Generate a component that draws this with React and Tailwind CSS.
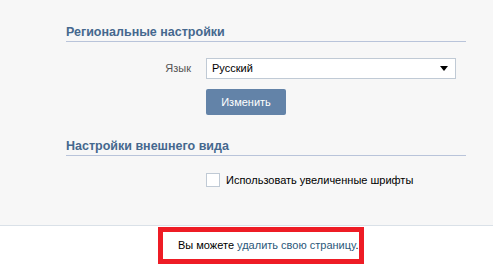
const App = () => {
  return (
    <div className="w-[493px] h-[267px] bg-white font-['Liberation_Sans',Arial,sans-serif] text-[11px] text-black overflow-hidden">
      <div className="h-[226px] bg-[#f7f7f7] border-b border-[#dae1e8] pl-[66px] pr-[27px] pt-[24px]">
        <div className="h-[18px] leading-[16px] border-b border-[#b9c4da] text-[#45688e] font-bold text-[12.5px]">
          Региональные настройки
        </div>

        <div className="flex items-center mt-[16px]">
          <div className="w-[125px] text-right text-[#555]">Язык</div>
          <div className="ml-[15px] w-[250px] h-[21px] bg-white border border-[#c0cad5] flex items-center justify-between pl-[5px] pr-[7px]">
            <span>Русский</span>
            <span className="w-0 h-0 border-l-[4px] border-r-[4px] border-t-[5px] border-l-transparent border-r-transparent border-t-black"></span>
          </div>
        </div>

        <div className="pl-[140px] mt-[10px]">
          <button className="w-[80px] h-[26px] rounded-[2px] bg-[#6383a8] text-white">Изменить</button>
        </div>

        <div className="mt-[23px] h-[18px] leading-[16px] border-b border-[#b9c4da] text-[#45688e] font-bold text-[12.5px]">
          Настройки внешнего вида
        </div>

        <div className="flex items-center pl-[140px] mt-[16px]">
          <span className="w-[14px] h-[14px] bg-white border border-[#c0cad5]"></span>
          <span className="ml-[6px]">Использовать увеличенные шрифты</span>
        </div>
      </div>

      <div className="pl-[158px] pt-[1px]">
        <div className="w-[206px] h-[37px] border-[5px] border-[#ee1c25] flex items-center pl-[15px] whitespace-nowrap">
          <span>
            Вы можете <a href="#" className="text-[#2b587a]">удалить свою страницу</a>.
          </span>
        </div>
      </div>
    </div>
  );
};

export default App;
